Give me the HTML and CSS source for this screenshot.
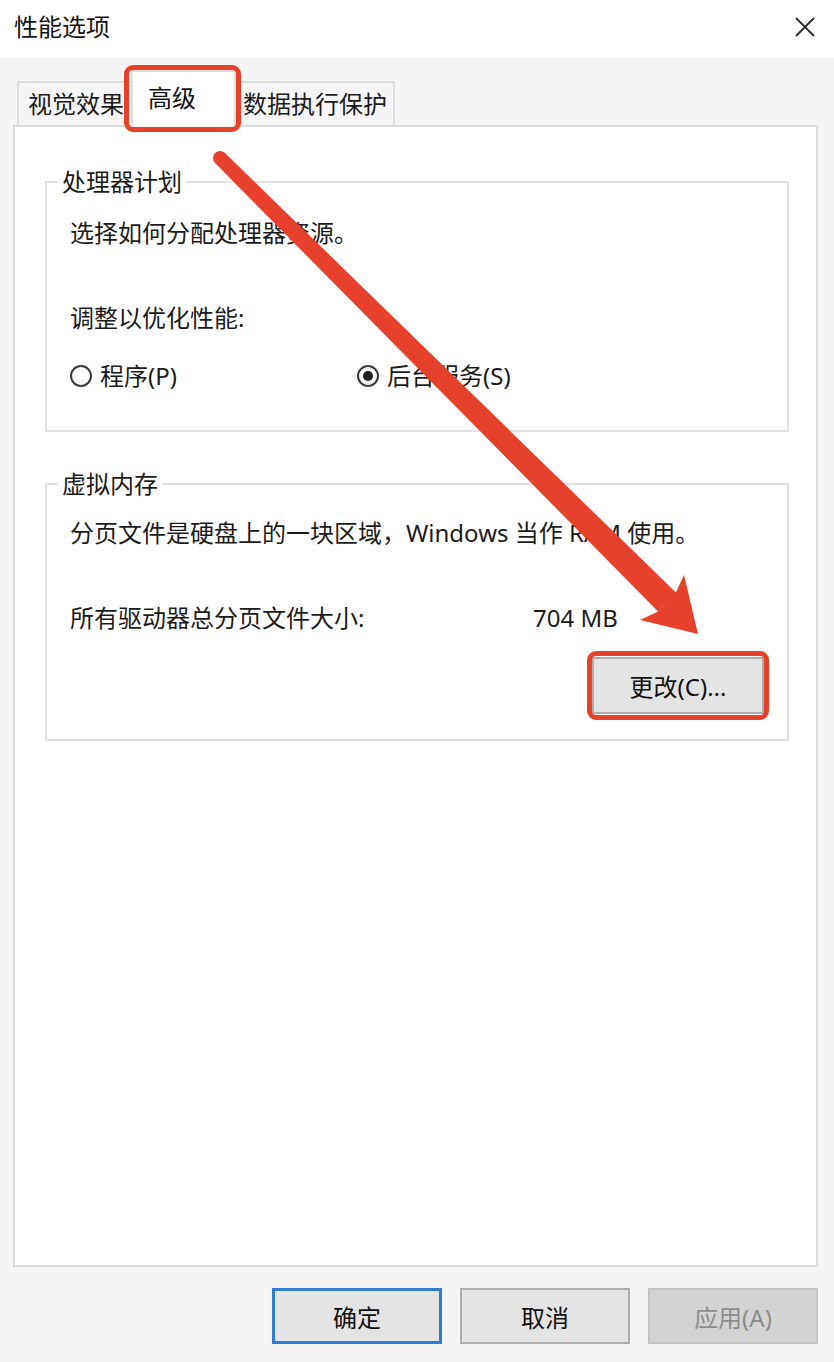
FILE: index.html
```html
<!DOCTYPE html>
<html lang="zh-CN">
<head>
    <meta charset="UTF-8">
    <meta name="viewport" content="width=device-width, initial-scale=1.0">
    <title>性能选项</title>
    <link rel="stylesheet" href="styles.css">
</head>
<body>
    <div class="window">
        <header class="titlebar">
            <span class="title">性能选项</span>
            <svg class="close" width="22" height="22" viewBox="0 0 22 22">
                <path d="M2 2 L20 20 M20 2 L2 20" stroke="#2b2b2b" stroke-width="1.8" fill="none"/>
            </svg>
        </header>

        <div class="tabs">
            <div class="tab tab-first">视觉效果</div>
            <div class="tab tab-active">高级<span class="mark mark-tab"></span></div>
            <div class="tab tab-last">数据执行保护</div>
        </div>

        <div class="panel">
            <fieldset class="group">
                <legend>处理器计划</legend>
                <div class="group-body body-cpu">
                    <p class="line">选择如何分配处理器资源。</p>
                    <p class="line line-gap">调整以优化性能:</p>
                    <div class="radios">
                        <label class="radio radio-first"><span class="dot"></span>程序(P)</label>
                        <label class="radio"><span class="dot checked"></span>后台服务(S)</label>
                    </div>
                </div>
            </fieldset>

            <fieldset class="group group-memory">
                <legend>虚拟内存</legend>
                <div class="group-body body-memory">
                    <p class="line">分页文件是硬盘上的一块区域，Windows 当作 RAM 使用。</p>
                    <div class="line line-gap size-row">
                        <span class="size-label">所有驱动器总分页文件大小:</span>
                        <span>704 MB</span>
                    </div>
                    <div class="change-row">
                        <button class="btn btn-change">更改(C)...<span class="mark mark-btn"></span></button>
                    </div>
                </div>
            </fieldset>
        </div>

        <footer class="footer">
            <button class="btn btn-default">确定</button>
            <button class="btn">取消</button>
            <button class="btn btn-disabled">应用(A)</button>
        </footer>

        <!-- annotation arrow -->
        <svg class="arrow" width="834" height="1362" viewBox="0 0 834 1362">
            <circle cx="220" cy="158" r="7" fill="#e8412b"/>
            <polygon points="224.9,153 676.2,592.8 657.8,611.2 215.1,163" fill="#e8412b"/>
            <polygon points="684,575 698,634 640,620 657,612 676,592" fill="#e8412b"/>
        </svg>
    </div>
</body>
</html>
```

FILE: styles.css
```css
body {
    margin: 0;
    background-color: #f5f5f5;
    color: #1b1b1b;
    font-family: "Noto Sans", "Noto Sans CJK SC", sans-serif;
    font-size: 24px;
}
.window {
    position: relative;
    width: 834px;
    height: 1362px;
    display: flex;
    flex-direction: column;
}
.titlebar {
    height: 58px;
    background-color: white;
    display: flex;
    align-items: center;
    justify-content: space-between;
    padding: 0 18px 4px 14px;
    box-sizing: border-box;
    flex-shrink: 0;
}
.title {
    color: #111;
    line-height: 30px;
}
.tabs {
    height: 67px;
    display: flex;
    align-items: flex-end;
    padding-left: 17px;
    flex-shrink: 0;
}
.tab {
    height: 44px;
    box-sizing: border-box;
    border: 2px solid #dcdcdc;
    border-bottom: none;
    display: flex;
    align-items: center;
    line-height: 30px;
    background-color: #f5f5f5;
}
.tab-first {
    width: 114px;
    padding-left: 9px;
    border-right: none;
}
.tab-last {
    width: 159px;
    padding-left: 7px;
    border-left: none;
}
.tab-active {
    position: relative;
    z-index: 2;
    width: 105px;
    height: 57px;
    margin-bottom: -2px;
    padding: 0 0 4px 15px;
    background-color: white;
    color: #111;
}
.mark {
    position: absolute;
    border: 5px solid #e8412b;
    border-radius: 9px;
    pointer-events: none;
}
.mark-tab {
    left: -9px;
    right: -7px;
    top: -7px;
    bottom: -5px;
}
.panel {
    flex: 1;
    margin: 0 16px 0 13px;
    border: 2px solid #dcdcdc;
    background-color: white;
    padding: 40px 27px 0 30px;
}
.group {
    margin: 0;
    padding: 0;
    min-width: 0;
    border: 2px solid #e2e2e2;
}
.group legend {
    margin-left: 11px;
    padding: 0 4px;
    line-height: 30px;
}
.group-memory {
    margin-top: 37px;
}
.group-body {
    padding: 0 23px;
}
.body-cpu {
    padding-top: 21px;
    padding-bottom: 39px;
}
.body-memory {
    padding-top: 19px;
    padding-bottom: 25px;
}
.line {
    margin: 0;
    line-height: 30px;
}
.line-gap {
    margin-top: 55px;
}
.radios {
    display: flex;
    margin-top: 28px;
    line-height: 30px;
}
.radio {
    display: flex;
    align-items: center;
    gap: 8px;
}
.radio-first {
    width: 287px;
}
.dot {
    width: 22px;
    height: 22px;
    box-sizing: border-box;
    border: 2px solid #3a3a3a;
    border-radius: 50%;
    display: flex;
    align-items: center;
    justify-content: center;
}
.dot.checked::after {
    content: "";
    width: 10px;
    height: 10px;
    border-radius: 50%;
    background-color: #222;
}
.size-row {
    display: flex;
}
.size-label {
    width: 463px;
}
.change-row {
    display: flex;
    justify-content: flex-end;
    margin-top: 24px;
}
.btn {
    position: relative;
    width: 170px;
    height: 56px;
    box-sizing: border-box;
    background-color: #e4e4e4;
    border: 2px solid #adadad;
    font-family: inherit;
    font-size: 24px;
    color: #111;
    padding: 0;
}
.btn-change {
    width: 172px;
    height: 57px;
}
.mark-btn {
    left: -7px;
    right: -7px;
    top: -8px;
    bottom: -8px;
}
.footer {
    height: 95px;
    box-sizing: border-box;
    flex-shrink: 0;
    display: flex;
    justify-content: flex-end;
    gap: 18px;
    padding: 21px 16px 18px 0;
}
.btn-default {
    border: 3px solid #2f7bd5;
}
.btn-disabled {
    background-color: #d3d3d3;
    border-color: #c4c4c4;
    color: #8c8c8c;
}
.arrow {
    position: absolute;
    left: 0;
    top: 0;
    pointer-events: none;
    z-index: 5;
}
```
